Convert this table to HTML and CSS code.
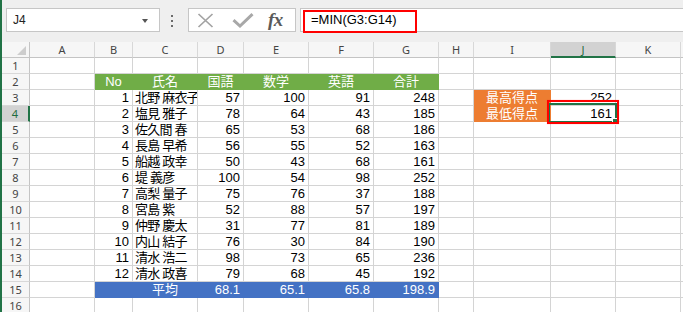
FILE: index.html
```html
<!DOCTYPE html>
<html lang="ja">
<head>
<meta charset="utf-8">
<title>MIN関数</title>
<link rel="stylesheet" href="styles.css">
</head>
<body>
<div class="app">
  <div class="edge"></div>
  <div class="main">
    <div class="toolbar">
      <div class="namebox"><span class="nb-text">J4</span><span class="nb-arrow"></span></div>
      <div class="dots"></div>
      <div class="fxbox">
        <svg class="ico-x" width="17" height="15" viewBox="0 0 17 15"><path d="M1.5 1 L15.5 14 M15.5 1 L1.5 14" stroke="#a3a3a3" stroke-width="1.7" fill="none"/></svg>
        <svg class="ico-check" width="22" height="15" viewBox="0 0 22 15"><path d="M1.5 7.2 L8 13 L20.5 1.2" stroke="#a8a8a8" stroke-width="3" fill="none"/></svg>
        <span class="fx">fx</span>
      </div>
      <div class="formula">
        <span class="formula-text">=MIN(G3:G14)</span>
        <span class="mark"></span>
      </div>
    </div>
    <div class="sheet">
      <!-- column headers -->
      <div class="ch corner"><span class="tri"></span></div>
      <div class="ch">A</div><div class="ch">B</div><div class="ch">C</div><div class="ch">D</div><div class="ch">E</div><div class="ch">F</div><div class="ch">G</div><div class="ch">H</div><div class="ch">I</div><div class="ch sel">J</div><div class="ch">K</div><div class="ch"></div>
      <!-- row 1 -->
      <div class="rh">1</div><div class="c"></div><div class="c"></div><div class="c"></div><div class="c"></div><div class="c"></div><div class="c"></div><div class="c"></div><div class="c"></div><div class="c"></div><div class="c"></div><div class="c"></div><div class="c"></div>
      <!-- row 2 -->
      <div class="rh">2</div><div class="c"></div><div class="c g">No</div><div class="c g">氏名</div><div class="c g">国語</div><div class="c g">数学</div><div class="c g">英語</div><div class="c g">合計</div><div class="c"></div><div class="c"></div><div class="c"></div><div class="c"></div><div class="c"></div>
      <!-- row 3 -->
      <div class="rh">3</div><div class="c"></div><div class="c r">1</div><div class="c nm">北野 麻衣子</div><div class="c r">57</div><div class="c r">100</div><div class="c r">91</div><div class="c r">248</div><div class="c"></div><div class="c o">最高得点</div><div class="c r">252</div><div class="c"></div><div class="c"></div>
      <!-- row 4 -->
      <div class="rh sel">4</div><div class="c"></div><div class="c r">2</div><div class="c nm">塩見 雅子</div><div class="c r">78</div><div class="c r">64</div><div class="c r">43</div><div class="c r">185</div><div class="c"></div><div class="c o">最低得点</div><div class="c r active">161<span class="selbox"><span class="handle"></span></span><span class="redbox"></span></div><div class="c"></div><div class="c"></div>
      <!-- row 5 -->
      <div class="rh">5</div><div class="c"></div><div class="c r">3</div><div class="c nm">佐久間 春</div><div class="c r">65</div><div class="c r">53</div><div class="c r">68</div><div class="c r">186</div><div class="c"></div><div class="c"></div><div class="c"></div><div class="c"></div><div class="c"></div>
      <!-- row 6 -->
      <div class="rh">6</div><div class="c"></div><div class="c r">4</div><div class="c nm">長島 早希</div><div class="c r">56</div><div class="c r">55</div><div class="c r">52</div><div class="c r">163</div><div class="c"></div><div class="c"></div><div class="c"></div><div class="c"></div><div class="c"></div>
      <!-- row 7 -->
      <div class="rh">7</div><div class="c"></div><div class="c r">5</div><div class="c nm">船越 政幸</div><div class="c r">50</div><div class="c r">43</div><div class="c r">68</div><div class="c r">161</div><div class="c"></div><div class="c"></div><div class="c"></div><div class="c"></div><div class="c"></div>
      <!-- row 8 -->
      <div class="rh">8</div><div class="c"></div><div class="c r">6</div><div class="c nm">堤 義彦</div><div class="c r">100</div><div class="c r">54</div><div class="c r">98</div><div class="c r">252</div><div class="c"></div><div class="c"></div><div class="c"></div><div class="c"></div><div class="c"></div>
      <!-- row 9 -->
      <div class="rh">9</div><div class="c"></div><div class="c r">7</div><div class="c nm">高梨 量子</div><div class="c r">75</div><div class="c r">76</div><div class="c r">37</div><div class="c r">188</div><div class="c"></div><div class="c"></div><div class="c"></div><div class="c"></div><div class="c"></div>
      <!-- row 10 -->
      <div class="rh">10</div><div class="c"></div><div class="c r">8</div><div class="c nm">宮島 紫</div><div class="c r">52</div><div class="c r">88</div><div class="c r">57</div><div class="c r">197</div><div class="c"></div><div class="c"></div><div class="c"></div><div class="c"></div><div class="c"></div>
      <!-- row 11 -->
      <div class="rh">11</div><div class="c"></div><div class="c r">9</div><div class="c nm">仲野 慶太</div><div class="c r">31</div><div class="c r">77</div><div class="c r">81</div><div class="c r">189</div><div class="c"></div><div class="c"></div><div class="c"></div><div class="c"></div><div class="c"></div>
      <!-- row 12 -->
      <div class="rh">12</div><div class="c"></div><div class="c r">10</div><div class="c nm">内山 結子</div><div class="c r">76</div><div class="c r">30</div><div class="c r">84</div><div class="c r">190</div><div class="c"></div><div class="c"></div><div class="c"></div><div class="c"></div><div class="c"></div>
      <!-- row 13 -->
      <div class="rh">13</div><div class="c"></div><div class="c r">11</div><div class="c nm">清水 浩二</div><div class="c r">98</div><div class="c r">73</div><div class="c r">65</div><div class="c r">236</div><div class="c"></div><div class="c"></div><div class="c"></div><div class="c"></div><div class="c"></div>
      <!-- row 14 -->
      <div class="rh">14</div><div class="c"></div><div class="c r">12</div><div class="c nm">清水 政喜</div><div class="c r">79</div><div class="c r">68</div><div class="c r">45</div><div class="c r">192</div><div class="c"></div><div class="c"></div><div class="c"></div><div class="c"></div><div class="c"></div>
      <!-- row 15 -->
      <div class="rh">15</div><div class="c"></div><div class="c b"></div><div class="c b ctr">平均</div><div class="c b r">68.1</div><div class="c b r">65.1</div><div class="c b r">65.8</div><div class="c b r">198.9</div><div class="c"></div><div class="c"></div><div class="c"></div><div class="c"></div><div class="c"></div>
      <!-- row 16 -->
      <div class="rh">16</div><div class="c"></div><div class="c"></div><div class="c"></div><div class="c"></div><div class="c"></div><div class="c"></div><div class="c"></div><div class="c"></div><div class="c"></div><div class="c"></div><div class="c"></div><div class="c"></div>
    </div>
  </div>
</div>
</body>
</html>
```
FILE: styles.css
```css
html, body {
  margin: 0;
  padding: 0;
}
body {
  width: 683px;
  height: 312px;
  overflow: hidden;
  background: #ffffff;
  font-family: "Liberation Sans", "Noto Sans CJK JP", sans-serif;
}
.app {
  display: flex;
  height: 312px;
  overflow: hidden;
}
.edge {
  flex: none;
  width: 2px;
  background: #217346;
}
.main {
  flex: 1;
  min-width: 0;
  display: flex;
  flex-direction: column;
}

/* formula bar */
.toolbar {
  flex: none;
  height: 42px;
  box-sizing: border-box;
  padding-top: 8px;
  background: #efefef;
  display: flex;
  align-items: flex-start;
}
.namebox {
  margin-left: 4px;
  width: 154px;
  height: 24px;
  box-sizing: border-box;
  border: 1px solid #c6c6c6;
  background: #ffffff;
  display: flex;
  align-items: center;
  justify-content: space-between;
  padding: 0 11px 0 6px;
}
.nb-text {
  font-family: "Liberation Sans", sans-serif;
  font-size: 12px;
  color: #222222;
}
.nb-arrow {
  width: 0;
  height: 0;
  border-left: 3.5px solid transparent;
  border-right: 3.5px solid transparent;
  border-top: 4px solid #555555;
  margin-top: 1px;
}
.dots {
  margin-left: 11px;
  margin-top: 7px;
  width: 2px;
  height: 12px;
  background: linear-gradient(#6a6a6a 0 2px, transparent 2px 5px, #6a6a6a 5px 7px, transparent 7px 10px, #6a6a6a 10px 12px);
}
.fxbox {
  margin-left: 15px;
  width: 108px;
  height: 24px;
  box-sizing: border-box;
  border: 1px solid #c6c6c6;
  background: #ffffff;
  display: flex;
  align-items: center;
  padding-left: 8px;
}
.ico-x {
  display: block;
}
.ico-check {
  display: block;
  margin-left: 18px;
}
.fx {
  margin-left: 14px;
  font-family: "Liberation Serif", serif;
  font-style: italic;
  font-weight: bold;
  font-size: 19px;
  line-height: 20px;
  color: #5a5a5a;
  letter-spacing: -0.5px;
}
.formula {
  flex: 1;
  margin-left: 4px;
  height: 24px;
  box-sizing: border-box;
  border: 1px solid #c6c6c6;
  border-right: none;
  background: #ffffff;
  position: relative;
  padding-left: 10px;
  font-size: 13px;
  line-height: 22px;
  color: #000000;
}
.mark {
  position: absolute;
  left: 2px;
  top: 1px;
  width: 114px;
  height: 23px;
  box-sizing: border-box;
  border: 2px solid #ff0000;
}

/* sheet */
.sheet {
  display: grid;
  grid-template-columns: 28px 65px 38px 65px 46px 65px 65px 65px 35px 77px 65px 65px 1fr;
  grid-auto-rows: 16px;
  background: #ffffff;
}
.ch {
  box-sizing: border-box;
  background: #f6f6f6;
  border-right: 1px solid #d8d8d8;
  border-bottom: 1px solid #c4c4c4;
  font-family: "Noto Sans", sans-serif;
  font-size: 11px;
  line-height: 15px;
  text-align: center;
  color: #444444;
  overflow: hidden;
}
.ch.sel {
  background: #d2d2d2;
  border-bottom: 2px solid #217346;
  color: #1e6b40;
}
.corner {
  display: flex;
  justify-content: flex-end;
  align-items: flex-end;
  padding: 0 3px 2px 0;
  border-right-color: #c4c4c4;
}
.tri {
  width: 0;
  height: 0;
  border-left: 9px solid transparent;
  border-bottom: 9px solid #cdcdcd;
}
.rh {
  box-sizing: border-box;
  background: #f6f6f6;
  border-right: 1px solid #c4c4c4;
  border-bottom: 1px solid #d8d8d8;
  font-family: "Noto Sans", sans-serif;
  font-size: 11px;
  line-height: 15px;
  text-align: center;
  color: #444444;
}
.rh.sel {
  background: #d2d2d2;
  border-right: 2px solid #217346;
  color: #1e6b40;
}
.c {
  box-sizing: border-box;
  border-right: 1px solid #d4d4d4;
  border-bottom: 1px solid #d4d4d4;
  padding: 0 2px;
  font-size: 13px;
  line-height: 15px;
  color: #000000;
  white-space: nowrap;
}
.nm {
  letter-spacing: -0.8px;
  overflow: hidden;
}
.r {
  text-align: right;
  padding-right: 3px;
}
.ctr {
  text-align: center;
}
.g {
  background: #70ad47;
  border-color: #70ad47;
  color: #ffffff;
  text-align: center;
}
.b {
  background: #4472c4;
  border-color: #4472c4;
  color: #ffffff;
}
.o {
  background: #ed7d31;
  border-color: #ed7d31;
  color: #ffffff;
  text-align: center;
}
.active {
  position: relative;
  z-index: 2;
}
.selbox {
  position: absolute;
  left: -3px;
  top: -3px;
  right: -2px;
  bottom: -2px;
  border: 2px solid #217346;
  pointer-events: none;
}
.handle {
  position: absolute;
  right: -4px;
  bottom: -4px;
  width: 5px;
  height: 5px;
  background: #217346;
  border: 1px solid #ffffff;
}
.redbox {
  position: absolute;
  left: -4px;
  top: -6px;
  right: -4px;
  bottom: -3px;
  border: 2px solid #ff0000;
  box-shadow: 0 0 1px rgba(255, 0, 0, 0.35);
  pointer-events: none;
}
```
